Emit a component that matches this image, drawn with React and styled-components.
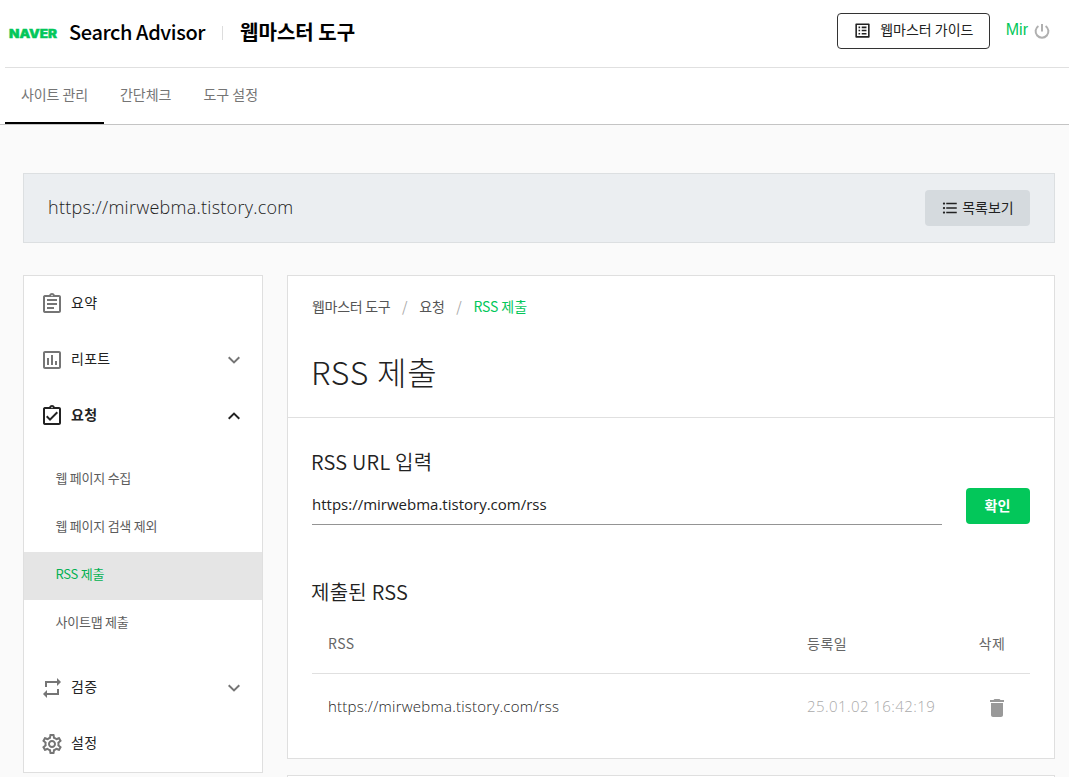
import React, { useState } from 'react'
import styled, { createGlobalStyle } from 'styled-components'
import {
  MdOutlineAssignment,
  MdOutlinePoll,
  MdOutlineAssignmentTurnedIn,
  MdRepeat,
  MdOutlineSettings,
  MdListAlt,
  MdFormatListBulleted,
  MdDelete,
} from 'react-icons/md'

const GlobalStyle = createGlobalStyle`
  * { box-sizing: border-box; }
  body {
    margin: 0;
    background: #fafafa;
    color: #222;
    font-family: 'Noto Sans CJK KR', sans-serif;
    font-size: 14px;
    overflow: hidden;
  }
  svg { display: block; flex: none; }
  h1, h2 { margin: 0; font-weight: 300; }
  button, input { font-family: inherit; }
`

const Text = styled.span`
  padding-bottom: 2px;
  white-space: nowrap;
  font-family: ${p => p.$font || 'inherit'};
  font-size: ${p => p.$size || 14}px;
  font-weight: ${p => p.$weight || 'inherit'};
  letter-spacing: ${p => p.$ls || 0}px;
`

const Top = styled.header`
  background: #fff;
  height: 125px;
  border-bottom: 1px solid #c4c4c4;
`

const Header = styled.div`
  display: flex;
  align-items: center;
  height: 68px;
  margin-left: 5px;
  padding: 0 19px 3px 3px;
  border-bottom: 1px solid #e0e0e0;
  color: #000;
`

const Logo = styled.svg`
  width: 50px;
  height: 16px;
  margin: 4px 11px 0 0;
`

const Divider = styled.i`
  width: 1px;
  height: 14px;
  margin: 2px 17px 0 17px;
  background: #ddd;
`

const GuideButton = styled.button`
  display: flex;
  align-items: center;
  justify-content: center;
  gap: 8px;
  width: 153px;
  height: 36px;
  margin: -3px 16px 0 auto;
  padding: 0;
  border: 1px solid #333;
  border-radius: 4px;
  background: #fff;
  color: #222;
  span { padding-bottom: 3px; }
`

const User = styled.div`
  display: flex;
  align-items: center;
  gap: 6px;
  padding-bottom: 3px;
  color: #03c75a;
`

const Tabs = styled.nav`
  display: flex;
  height: 56px;
  margin-left: 5px;
`

const Tab = styled.a`
  display: flex;
  align-items: center;
  padding: 0 16px;
  border-bottom: 2px solid ${p => (p.$active ? '#000' : 'transparent')};
  color: #757575;
`

const Page = styled.main`
  display: grid;
  grid-template-columns: 240px 768px;
  grid-template-rows: 102px 502px;
  column-gap: 24px;
  align-items: start;
  height: 652px;
  padding: 48px 14px 0 23px;
`

const SiteBar = styled.div`
  grid-column: 1 / 3;
  display: flex;
  align-items: center;
  justify-content: space-between;
  height: 70px;
  padding: 0 24px;
  border: 1px solid #dcdfe1;
  background: #ebeef1;
`

const ListButton = styled.button`
  display: flex;
  align-items: center;
  justify-content: center;
  gap: 3px;
  width: 105px;
  height: 36px;
  padding: 0;
  border: 0;
  border-radius: 4px;
  background: #d5dade;
  color: #222;
`

const Sidebar = styled.aside`
  height: 498px;
  border: 1px solid #dfdfdf;
  background: #fff;
`

const MenuItem = styled.div`
  display: flex;
  align-items: center;
  height: 56px;
  padding: 0 22px 0 16px;
  color: ${p => (p.$open ? '#222' : '#757575')};
  cursor: pointer;
`

const MenuLabel = styled(Text)`
  flex: 1;
  margin: -2px 0 0 7px;
  color: #222;
  font-weight: ${p => (p.$open ? 700 : 400)};
`

const SubMenu = styled.div`
  padding: 12px 0;
`

const SubItem = styled.div`
  height: 48px;
  padding: 0 31.5px;
  line-height: 43px;
  background: ${p => (p.$active ? '#e5e5e5' : 'transparent')};
  color: ${p => (p.$active ? '#03b152' : '#5c5c5c')};
`

const Card = styled.section`
  height: ${p => p.$height}px;
  border: 1px solid #dfdfdf;
  background: #fff;
`

const NextCard = styled.section`
  height: 2px;
  border: 1px solid #dfdfdf;
  border-bottom: 0;
  background: #fff;
`

const Content = styled.div`
  display: grid;
  gap: 16px;
`

const CardHead = styled.div`
  height: 142px;
  padding: 19px 24px 0;
  border-bottom: 1px solid #e0e0e0;
`

const Crumbs = styled.div`
  display: flex;
  height: 22px;
  line-height: 22px;
  gap: 11.7px;
  color: #555;
  i { color: #aaa; font-style: normal; }
  span:last-child { color: #03c75a; }
`

const Title = styled.h1`
  margin: 31px 0 0 -1px;
  line-height: 46px;
`

const CardBody = styled.div`
  padding: 27px 24px 0;
`

const SubTitle = styled.h2`
  height: 32px;
  margin-left: -1px;
  line-height: 32px;
  font-weight: 350;
`

const InputRow = styled.div`
  display: flex;
  align-items: flex-start;
  gap: 24px;
  margin-top: 11px;
`

const UrlInput = styled.input`
  flex: 1;
  height: 37px;
  padding: 0 0 5px;
  border: 0;
  border-bottom: 1px solid #949494;
  outline: none;
  color: #222;
  font-family: 'Open Sans', sans-serif;
  font-size: 15px;
`

const Submit = styled.button`
  width: 64px;
  height: 36px;
  padding: 0 1px 3px 0;
  border: 0;
  border-radius: 4px;
  background: #03c75a;
  color: #fff;
`

const Submitted = styled.div`
  margin-top: 50px;
`

const Row = styled.div`
  display: grid;
  grid-template-columns: 479px 171.5px 1fr;
  align-items: center;
  height: ${p => (p.$head ? 67 : 64)}px;
  padding: ${p => (p.$head ? '8px 0 0 16px' : '4px 0 0 16px')};
  border-bottom: ${p => (p.$head ? '1px solid #e0e0e0' : '0')};
  color: ${p => (p.$head ? '#666' : '#222')};
`

const Url = styled(Text)`
  padding-bottom: 4px;
`

const Stamp = styled(Text)`
  padding-bottom: 5px;
  color: #aaa;
`

const Trash = styled(MdDelete)`
  margin: 0 0 0 6px;
  color: #999;
`

const OPEN_SANS = "'Open Sans', sans-serif"

const subItems = [
  { name: '웹 페이지 수집' },
  { name: '웹 페이지 검색 제외' },
  { name: 'RSS 제출', active: true },
  { name: '사이트맵 제출' },
]

const rssList = [
  { url: 'https://mirwebma.tistory.com/rss', date: '25.01.02 16:42:19' },
]

function PowerIcon() {
  return (
    <svg width="16" height="16" viewBox="0 0 16 16" fill="none" stroke="#b0b0b0" strokeWidth="2">
      <path d="M8 1v7.5" />
      <path d="M4.4 3A6.4 6.4 0 1 0 11.6 3" />
    </svg>
  )
}

function Chevron({ up }) {
  return (
    <svg width="12" height="8" viewBox="0 0 12 8" fill="none" stroke="currentColor" strokeWidth="2">
      <path d={up ? 'M0.7 6.7L6 1.6l5.3 5.1' : 'M0.7 1.3L6 6.400l5.300-5.100'} />
    </svg>
  )
}

function Menu({ icon: Icon, name, arrow, open, onClick }) {
  return (
    <MenuItem $open={open} onClick={onClick}>
      <Icon size={24} />
      <MenuLabel $open={open} $ls={0.3}>{name}</MenuLabel>
      {arrow && <Chevron up={open} />}
    </MenuItem>
  )
}

export default function App() {
  const [open, setOpen] = useState(true)
  const [url, setUrl] = useState('https://mirwebma.tistory.com/rss')

  return (
    <>
      <GlobalStyle />
      <Top>
        <Header>
          <Logo viewBox="0 0 50 16">
            <text x="1" y="12" textLength="48" lengthAdjust="spacingAndGlyphs" fontFamily="Inter, sans-serif" fontWeight="900" fontSize="11.5" fill="#03c75a" stroke="#03c75a" strokeWidth="0.4">NAVER</text>
          </Logo>
          <Text $size={20} $weight={500} $ls={-0.4}>Search Advisor</Text>
          <Divider />
          <Text $size={20} $weight={700}>웹마스터 도구</Text>
          <GuideButton>
            <MdListAlt size={19} />
            <Text>웹마스터 가이드</Text>
          </GuideButton>
          <User>
            <Text $font="'Liberation Sans', sans-serif" $size={16}>Mir</Text>
            <PowerIcon />
          </User>
        </Header>
        <Tabs>
          <Tab $active><Text $ls={-0.1}>사이트 관리</Text></Tab>
          <Tab><Text>간단체크</Text></Tab>
          <Tab><Text>도구 설정</Text></Tab>
        </Tabs>
      </Top>
      <Page>
        <SiteBar>
          <Text $font={OPEN_SANS} $size={18} $weight={300} $ls={0.26}>https://mirwebma.tistory.com</Text>
          <ListButton>
            <MdFormatListBulleted size={18} />
            <Text>목록보기</Text>
          </ListButton>
        </SiteBar>
        <Sidebar>
          <Menu icon={MdOutlineAssignment} name="요약" />
          <Menu icon={MdOutlinePoll} name="리포트" arrow />
          <Menu icon={MdOutlineAssignmentTurnedIn} name="요청" arrow open={open} onClick={() => setOpen(!open)} />
          {open && (
            <SubMenu>
              {subItems.map(item => (
                <SubItem key={item.name} $active={item.active}>
                  <Text $size={13} $ls={-0.25}>{item.name}</Text>
                </SubItem>
              ))}
            </SubMenu>
          )}
          <Menu icon={MdRepeat} name="검증" arrow />
          <Menu icon={MdOutlineSettings} name="설정" />
        </Sidebar>
        <Content>
          <Card $height={484}>
            <CardHead>
              <Crumbs>
                <Text $ls={-0.3}>웹마스터 도구</Text>
                <i>/</i>
                <Text $ls={-0.2}>요청</Text>
                <i>/</i>
                <Text $ls={-0.1}>RSS 제출</Text>
              </Crumbs>
              <Title><Text $size={32} $ls={0.8}>RSS 제출</Text></Title>
            </CardHead>
            <CardBody>
              <SubTitle><Text $size={20} $ls={0.25}>RSS URL 입력</Text></SubTitle>
              <InputRow>
                <UrlInput value={url} onChange={e => setUrl(e.target.value)} />
                <Submit><Text $weight={700}>확인</Text></Submit>
              </InputRow>
              <Submitted>
                <SubTitle><Text $size={20} $ls={0.25}>제출된 RSS</Text></SubTitle>
                <Row $head>
                  <Text $ls={0.5}>RSS</Text>
                  <Text $ls={0.5}>등록일</Text>
                  <Text $ls={0.5}>삭제</Text>
                </Row>
                {rssList.map(rss => (
                  <Row key={rss.url}>
                    <Url $font={OPEN_SANS} $weight={300} $size={15} $ls={0.24}>{rss.url}</Url>
                    <Stamp $font={OPEN_SANS} $weight={300} $size={15} $ls={0.43}>{rss.date}</Stamp>
                    <Trash size={24} />
                  </Row>
                ))}
              </Submitted>
            </CardBody>
          </Card>
          <NextCard />
        </Content>
      </Page>
    </>
  )
}
